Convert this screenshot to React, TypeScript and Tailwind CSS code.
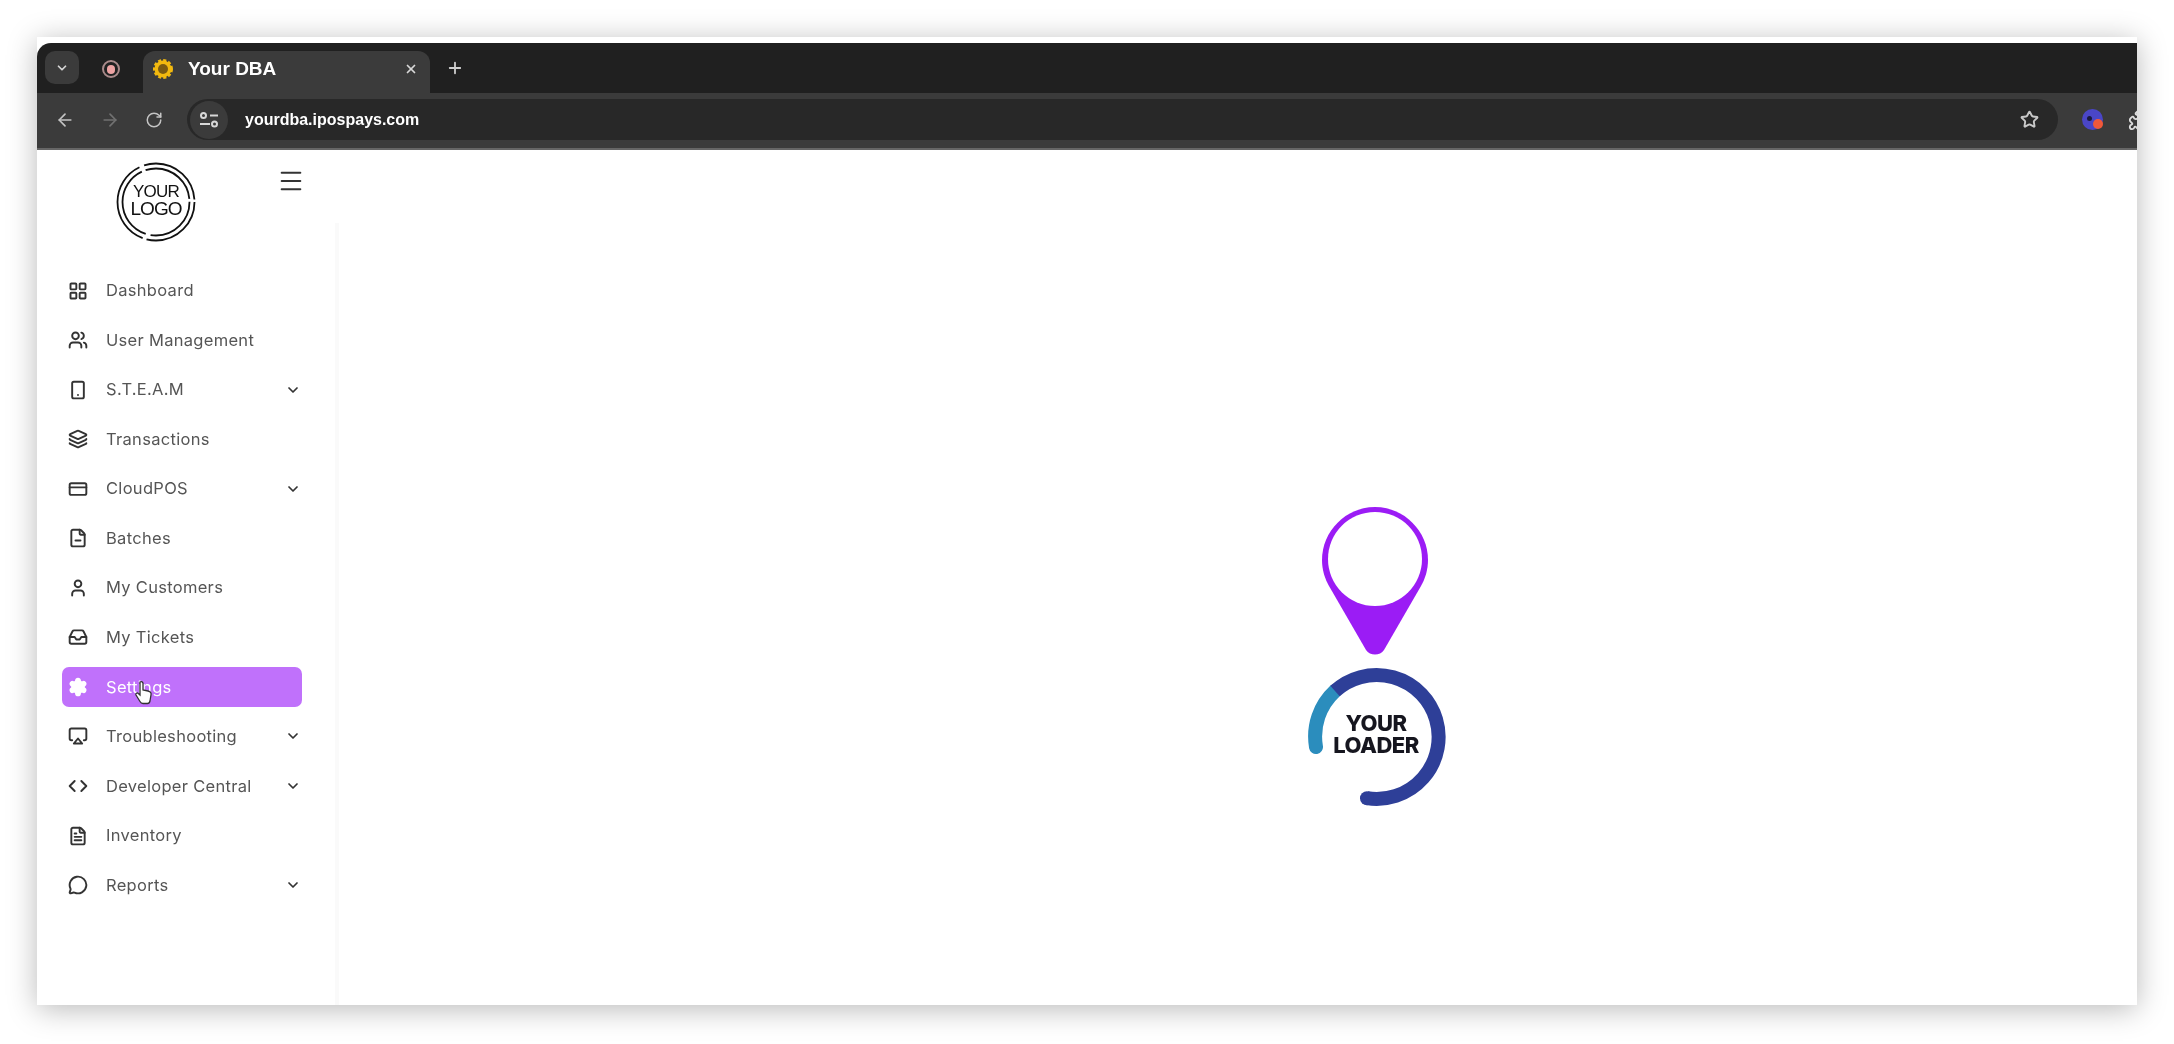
import {
  Airplay,
  ArrowLeft,
  ArrowRight,
  ChevronDown,
  Code,
  FileMinus,
  FileText,
  Inbox,
  Layers,
  LayoutGrid,
  Menu,
  MessageCircle,
  Plus,
  RotateCw,
  Settings,
  Smartphone,
  Star,
  User,
  Users,
  X,
  CreditCard,
  Puzzle,
} from 'lucide-react';

const navItems = [
  { name: 'Dashboard', icon: LayoutGrid },
  { name: 'User Management', icon: Users },
  { name: 'S.T.E.A.M', icon: Smartphone, more: true },
  { name: 'Transactions', icon: Layers },
  { name: 'CloudPOS', icon: CreditCard, more: true },
  { name: 'Batches', icon: FileMinus },
  { name: 'My Customers', icon: User },
  { name: 'My Tickets', icon: Inbox },
  { name: 'Settings', icon: Settings, active: true },
  { name: 'Troubleshooting', icon: Airplay, more: true },
  { name: 'Developer Central', icon: Code, more: true },
  { name: 'Inventory', icon: FileText },
  { name: 'Reports', icon: MessageCircle, more: true },
];

function Logo() {
  return (
    <svg width="82" height="80" viewBox="0 0 82 80" fill="none" stroke="#111">
      <circle cx="41" cy="40" r="38.5" strokeWidth="1.8" strokeDasharray="70 4 90 5 70 3" />
      <circle cx="41" cy="40" r="33.5" strokeWidth="1.8" strokeDasharray="58 5 80 4 60 3" />
      <text x="41" y="35" textAnchor="middle" fontFamily="Liberation Sans, sans-serif" fontSize="17" fill="#111" stroke="none" letterSpacing="-0.8">
        YOUR
      </text>
      <text x="41" y="53" textAnchor="middle" fontFamily="Liberation Sans, sans-serif" fontSize="19" fill="#111" stroke="none" letterSpacing="-1">
        LOGO
      </text>
    </svg>
  );
}

function Sunflower() {
  return (
    <svg width="22" height="22" viewBox="0 0 22 22">
      <circle cx="11" cy="11" r="8.5" fill="#f2b90f" stroke="#f2b90f" strokeWidth="3" strokeDasharray="3 2" />
      <circle cx="11" cy="11" r="5" fill="#7a5a12" />
    </svg>
  );
}

function SiteInfo() {
  return (
    <svg width="20" height="18" viewBox="0 0 20 18" fill="none" stroke="#d8d8d8" strokeWidth="2">
      <circle cx="4.500" cy="4.500" r="2.500" />
      <path d="M11 4.500h8M1 13h10" />
      <circle cx="15.500" cy="13" r="2.500" />
    </svg>
  );
}

function TabStrip() {
  return (
    <div className="flex h-[50px] items-end bg-[#202020] pl-[8px]">
      <div className="mb-[9px] flex h-[33px] w-[34px] items-center justify-center rounded-[10px] bg-[#3b3b3b]">
        <ChevronDown size={14} strokeWidth={3} className="text-[#d5d5d5]" />
      </div>
      <div className="mb-[15px] ml-[23px] flex h-[18px] w-[18px] items-center justify-center rounded-full border-2 border-[#a98a8a]">
        <div className="h-[9px] w-[8px] rounded-full bg-[#eda3a3]" />
      </div>
      <div className="ml-[23px] flex h-[42px] w-[287px] items-center rounded-t-[12px] bg-[#3b3b3b] pb-[6px] pl-[9px] pr-[12px]">
        <Sunflower />
        <span className="ml-[14px] flex-1 font-['Liberation_Sans',sans-serif] text-[19px] font-bold text-white">
          Your DBA
        </span>
        <X size={14} strokeWidth={3} className="text-[#d8d8d8]" />
      </div>
      <Plus size={18} strokeWidth={2.4} className="mb-[16px] ml-[16px] text-[#cfcfcf]" />
    </div>
  );
}

function Toolbar() {
  return (
    <div className="flex h-[57px] items-center border-b-2 border-[#666666] bg-[#3b3b3b] pb-[2px] pl-[18px]">
      <ArrowLeft size={20} strokeWidth={2} className="shrink-0 text-[#c4c4c4]" />
      <ArrowRight size={20} strokeWidth={2} className="ml-[25px] shrink-0 text-[#717171]" />
      <RotateCw size={18} strokeWidth={2} className="ml-[25px] shrink-0 text-[#c4c4c4]" />
      <div className="ml-[24px] flex h-[41px] w-[1871px] shrink-0 items-center rounded-full bg-[#282828] pl-[3px] pr-[19px]">
        <div className="flex h-[38px] w-[38px] items-center justify-center rounded-full bg-[#3b3b3b]">
          <SiteInfo />
        </div>
        <span className="ml-[17px] flex-1 font-['Liberation_Sans',sans-serif] text-[16px] font-bold text-white">
          yourdba.ipospays.com
        </span>
        <Star size={19} strokeWidth={2.4} className="text-[#c9c9c9]" />
      </div>
      <div className="relative ml-[24px] h-[21px] w-[21px] shrink-0 rounded-full bg-[#4a46c8]">
        <div className="absolute left-[5px] top-[7px] h-[5px] w-[5px] rounded-full bg-[#1a1a40]" />
        <div className="absolute left-[11px] top-[10px] h-[10px] w-[10px] rounded-full bg-[#f0583a]" />
      </div>
      <Puzzle size={22} strokeWidth={2} className="ml-[25px] shrink-0 text-[#dddddd]" />
    </div>
  );
}

function Sidebar() {
  return (
    <div className="flex w-[302px] shrink-0 flex-col">
      <div className="flex h-[73px] pl-[78px] pt-[12px]">
        <Logo />
        <Menu size={28} strokeWidth={1.7} className="ml-[80px] mt-[5px] text-[#333333]" />
      </div>
      <nav className="flex flex-1 flex-col gap-[9.56px] border-r-4 border-[#fafafa] pl-[25px] pr-[33px] pt-[47.5px]">
        {navItems.map((item) => (
          <div
            key={item.name}
            className={
              item.active
                ? 'relative flex h-10 items-center rounded-[7px] bg-[#c071fb] pl-[6px] pr-[1px] text-white'
                : 'flex h-10 items-center pl-[6px] pr-[1px] text-[#555555]'
            }
          >
            <item.icon
              size={20}
              strokeWidth={2.3}
              className={item.active ? 'text-white' : 'text-[#333333]'}
              fill={item.active ? 'white' : 'none'}
            />
            <span className="ml-[18px] flex-1 font-['Inter',sans-serif] text-[16.5px] tracking-[0.3px]">{item.name}</span>
            {item.more && <ChevronDown size={16} strokeWidth={2.6} className="text-[#333333]" />}
            {item.active && (
              <svg className="absolute left-[72px] top-[13px]" width="20" height="26" viewBox="0 0 20 26">
                <path
                  d="M6 2c1.500-1 3 0 3 1.500V10l5 1c2.500.5 3.500 2 3 4l-1 6c-.3 1.500-1 2.500-2.500 2.500H9c-1.500 0-2.300-.7-3-2L2 15c-.7-1.500 1-2.800 2.300-1.500L6 15V3z"
                  fill="white"
                  stroke="#333"
                  strokeWidth="1.300"
                />
              </svg>
            )}
          </div>
        ))}
      </nav>
    </div>
  );
}

function Loader() {
  return (
    <div className="flex w-[140px] flex-col items-center">
      <svg width="108" height="150" viewBox="0 0 108 150" className="ml-[-4px]">
        <path
          d="M54 1C25 1 1 25 1 54c0 10 3 19 7 26l37 64c4 6 14 6 18 0l37-64c4-7 7-16 7-26C107 25 83 1 54 1z"
          fill="#9b1cf5"
        />
        <circle cx="54" cy="53" r="47" fill="white" />
      </svg>
      <svg width="140" height="140" viewBox="0 0 140 140" className="mt-[11px]">
        <path d="M28 24A62 62 0 0 0 9 80" fill="none" stroke="#2b8dbd" strokeWidth="14" strokeLinecap="round" />
        <path d="M60 131.200A62 62 0 1 0 28 24" fill="none" stroke="#2e3f98" strokeWidth="14" />
        <circle cx="60" cy="131.200" r="7" fill="#2e3f98" />
        <text x="69" y="64" textAnchor="middle" fontFamily="Inter, sans-serif" fontWeight="800" fontSize="22" fill="#16161f" letterSpacing="-0.5">
          YOUR
        </text>
        <text x="69" y="86" textAnchor="middle" fontFamily="Inter, sans-serif" fontWeight="800" fontSize="22" fill="#16161f" letterSpacing="-0.5">
          LOADER
        </text>
      </svg>
    </div>
  );
}

export default function App() {
  return (
    <div className="h-[1044px] w-[2174px] overflow-hidden bg-white pl-[37px] pt-[37px]">
      <div className="flex h-[968px] w-[2100px] flex-col overflow-hidden bg-white pt-[6px] shadow-[0_4px_28px_rgba(0,0,0,0.28)]">
        <div className="overflow-hidden rounded-tl-[14px] blur-[0.4px]">
          <TabStrip />
          <Toolbar />
        </div>
        <div className="flex flex-1 blur-[0.5px]">
          <Sidebar />
          <main className="flex-1 pl-[968px] pt-[356px]">
            <Loader />
          </main>
        </div>
      </div>
    </div>
  );
}
